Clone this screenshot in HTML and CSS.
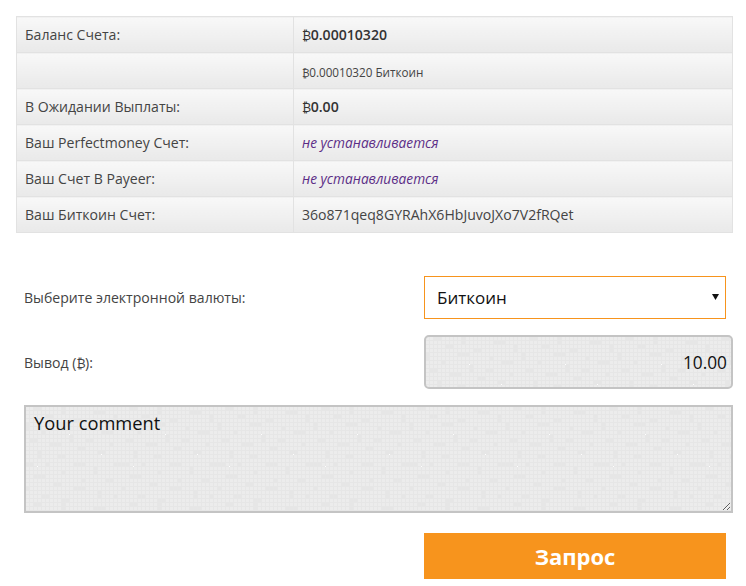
FILE: index.html
```html
<!DOCTYPE html>
<html lang="ru">
<head>
<meta charset="utf-8">
<title>Вывод</title>
<link rel="stylesheet" href="styles.css">
</head>
<body>
<table class="info">
  <tr><td class="k">Баланс Счета:</td><td class="v strong"><span class="btc">₿</span>0.00010320</td></tr>
  <tr><td class="k"></td><td class="v small"><span class="btc">₿</span>0.00010320 Биткоин</td></tr>
  <tr><td class="k">В Ожидании Выплаты:</td><td class="v strong"><span class="btc">₿</span>0.00</td></tr>
  <tr><td class="k">Ваш Perfectmoney Счет:</td><td class="v unset">не устанавливается</td></tr>
  <tr><td class="k">Ваш Счет В Payeer:</td><td class="v unset">не устанавливается</td></tr>
  <tr><td class="k">Ваш Биткоин Счет:</td><td class="v">36o871qeq8GYRAhX6HbJuvoJXo7V2fRQet</td></tr>
</table>
<form class="form">
  <div class="row row-select">
    <label class="label">Выберите электронной валюты:</label>
    <select class="select"><option>Биткоин</option></select>
  </div>
  <div class="row row-amount">
    <label class="label">Вывод (<span class="btc">₿</span>):</label>
    <input class="amount" type="text" value="10.00">
  </div>
  <textarea class="comment">Your comment</textarea>
  <div class="actions"><button class="submit" type="button">Запрос</button></div>
</form>
</body>
</html>
```
FILE: styles.css
```css
* { box-sizing: border-box; }
html, body { margin: 0; background: #fff; }
body { width: 746px; height: 586px; padding: 16px 13px 0 16px; overflow: hidden; font-family: "Open Sans", sans-serif; color: #333; }
.btc { font-family: "DejaVu Sans", "Liberation Sans", "Noto Sans", sans-serif; font-size: .88em; font-weight: 400; letter-spacing: -.04em; }
.info { width: 717px; border-collapse: collapse; table-layout: fixed; }
.info td { height: 36px; padding: 0 8px; border: 1px solid #e2e2e2; background: linear-gradient(#f8f8f8, #e9e9e9); font-size: 14.08px; color: #444; vertical-align: middle; }
.info .k { width: 277px; }
.info .strong { font-weight: 600; color: #333; }
.info .small { font-size: 11.7px; padding-top: 3px; }
.info .unset { font-style: italic; font-size: 13.7px; color: #5b2d86; }
.form { padding-left: 8px; margin-top: 42px; }
.row { display: flex; align-items: center; justify-content: space-between; }
.label { font-size: 14.08px; color: #444; }
.row-select { width: 702px; height: 44px; }
.row-amount { margin-top: 16px; height: 54px; }
.select { appearance: none; width: 302px; height: 43px; padding: 0 12px; border: 1px solid #f7941d; border-radius: 0; background: #fff url("data:image/svg+xml,%3Csvg xmlns='http://www.w3.org/2000/svg' width='7' height='6'%3E%3Cpath d='M0 0h7L3.5 6z' fill='%23111'/%3E%3C/svg%3E") no-repeat right 6px center; font: 17px "Open Sans", sans-serif; color: #111; }
.amount, .comment {
  border: 2px solid #c4c4c4; color: #111; font-family: "Open Sans", sans-serif;
  background-color: #e6e6e6;
  background-image: url("data:image/svg+xml,%3Csvg xmlns='http://www.w3.org/2000/svg' width='96' height='96'%3E%3Cdefs%3E%3Cpattern id='g' width='4' height='4' patternUnits='userSpaceOnUse'%3E%3Crect width='3' height='3' fill='%23ececec'/%3E%3C/pattern%3E%3C/defs%3E%3Crect width='96' height='96' fill='url(%23g)'/%3E%3Cpath fill='%23e6e6e6' d='M8 0h8v4H8zM36 0h4v8h-4zM68 4h12v4H68zM20 8h8v4h-8zM48 12h8v4h-8zM88 8h4v8h-4zM0 16h4v8H0zM32 16h12v4H32zM64 20h4v4h-4zM16 24h4v4h-4zM76 24h12v4H76zM44 28h4v8h-4zM4 32h8v4H4zM24 36h12v4H24zM60 32h8v4h-8zM84 36h4v4h-4zM12 44h4v8h-4zM52 40h8v4h-8zM72 44h8v4h-8zM32 48h8v4h-8zM0 56h8v4H0zM20 56h4v4h-4zM48 56h12v4H48zM88 56h8v4h-8zM68 60h4v8h-4zM36 64h4v4h-4zM8 68h12v4H8zM56 72h4v4h-4zM80 72h8v4h-8zM28 76h8v4h-8zM0 80h4v4H0zM48 80h12v4H48zM72 84h4v8h-4zM16 88h8v4h-8zM36 92h8v4h-8zM88 88h4v4h-4z'/%3E%3Crect x='43' y='27' width='1' height='1' fill='%23fff'/%3E%3Crect x='11' y='59' width='1' height='1' fill='%23fff'/%3E%3Crect x='75' y='47' width='1' height='1' fill='%23fff'/%3E%3C/svg%3E");
}
.amount { width: 309px; height: 54px; padding: 0 4px; border-radius: 5px; text-align: right; font-size: 17.3px; }
.comment { display: block; width: 709px; height: 108px; margin-top: 16px; padding: 3px 8px; border-radius: 0; font-size: 18.3px; line-height: 26px; resize: vertical; }
.actions { width: 702px; margin-top: 20px; display: flex; justify-content: flex-end; }
.submit { width: 302px; height: 46px; border: 0; background: #f7941d; color: #fff; font: 700 22px "Open Sans", sans-serif; }
```
